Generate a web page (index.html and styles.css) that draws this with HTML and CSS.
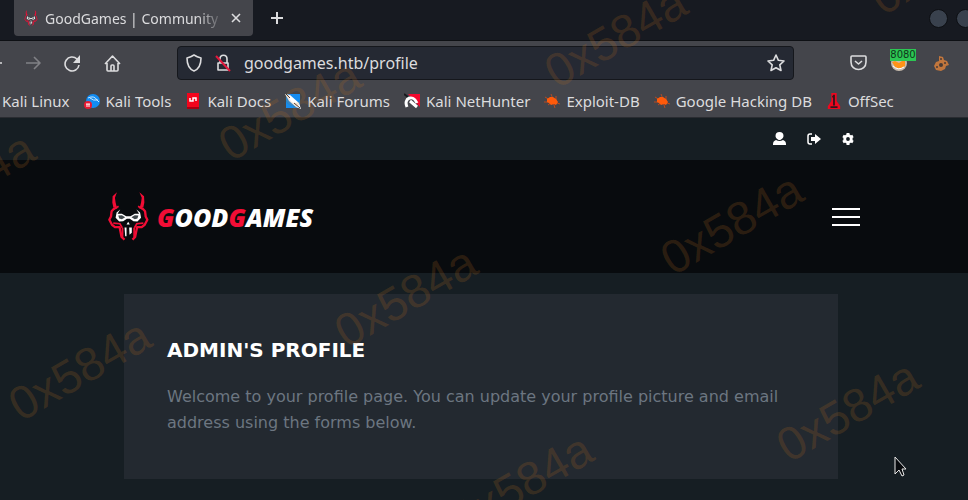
FILE: index.html
```html
<!DOCTYPE html>
<html lang="en">

<head>
    <meta charset="UTF-8">
    <meta name="viewport" content="width=device-width, initial-scale=1.0">
    <title>GoodGames | Community</title>
    <link rel="stylesheet" href="styles.css">
</head>

<body>
    <svg class="symbols" aria-hidden="true">
        <symbol id="mascot" viewBox="22 14 124 148">
            <path fill="#f20d35" d="M49 15 L36 27 L35 46 L38 60 L50 65 L45 46 L43 31 Z M117 15 L131 27 L132 46 L129 60 L117 65 L122 46 L124 31 Z" />
            <path fill="none" stroke="#f20d35" stroke-width="7" stroke-linejoin="round" d="M42 62 L33 72 L31 88 L26 98 L34 113 L43 120 L57 120 L63 150 L72 158 M125 62 L134 72 L136 88 L141 98 L133 113 L124 120 L110 120 L104 150 L96 158" />
            <path fill="none" stroke="#f20d35" stroke-width="5" d="M40 66 L54 57 M127 66 L113 57 M38 108 L58 110 L65 122 M129 108 L109 110 L102 122 M66 122 V150 M101 122 V150" />
            <path fill="#fff" d="M59 67 L48 76 L45 92 L56 103 L68 102 L79 95 H88 L99 102 L111 103 L122 92 L119 76 L108 67 L116 80 L103 80 L90 87 H77 L64 80 L51 80 Z" />
            <path fill="#40484c" d="M53 85 L64 84 L74 90 L64 96 L56 94 Z M114 85 L103 84 L93 90 L103 96 L111 94 Z" />
            <path fill="#fff" d="M83 104 L88 112 H78 Z M72 121 H78 V148 H74 Z M86 121 H94 V137 L87 143 Z" />
        </symbol>
        <symbol id="spider" viewBox="0 0 16 16">
            <path stroke="#b64b22" stroke-width="1" d="M1 4 L6 7 M0 9 H7 M4 12 L8 9 M7 1 L9 6 M12 3 V7 M16 11 L10 9 M11 15 L9 9" />
            <path fill="#ff5a0a" d="M3 6 L6 4 L9 4 L12 6 L14 9 L12 12 L10 11 L7 12 L5 10 L3 9 Z" />
        </symbol>
    </svg>

    <div class="tab-bar">
        <div class="tab">
            <svg class="icon-small"><use href="#mascot" /></svg>
            <span class="tab-title">GoodGames | Community</span>
            <button class="icon-button" aria-label="Close tab">
                <svg width="10" height="10" viewBox="0 0 10 10"><path class="line" d="M1 1 L9 9 M9 1 L1 9" /></svg>
            </button>
        </div>
        <button class="icon-button" aria-label="New tab">
            <svg width="14" height="14" viewBox="0 0 14 14"><path class="line bold" d="M7 1 V13 M1 7 H13" /></svg>
        </button>
        <div class="window-buttons">
            <button aria-label="Minimize"></button>
            <button aria-label="Maximize"></button>
        </div>
    </div>

    <div class="toolbar">
        <div class="nav-row">
            <button class="icon-button" aria-label="Back">
                <svg width="2" height="16" viewBox="0 0 2 16"><path class="line" d="M0 8 H2" /></svg>
            </button>
            <button class="icon-button dim" aria-label="Forward">
                <svg width="16" height="16" viewBox="0 0 16 16"><path class="line" d="M1 8 H15 M9 2 L15 8 L9 14" /></svg>
            </button>
            <button class="icon-button" aria-label="Reload">
                <svg width="17" height="17" viewBox="0 0 17 17"><path class="line" d="M15 10 A7 7 0 1 1 13 4 L15 6" /><path fill="#dcdcde" d="M16 0 V8 H9 Z" /></svg>
            </button>
            <button class="icon-button" aria-label="Home">
                <svg width="17" height="17" viewBox="0 0 17 17"><path class="line" d="M1 9 L8.500 1 L16 9 M3 8 V15 Q3 16 4 16 H13 Q14 16 14 15 V8 M7 16 V11 Q7 10 8 10 H9 Q10 10 10 11 V16" /></svg>
            </button>
            <div class="url-bar">
                <svg width="16" height="18" viewBox="0 0 16 18"><path class="line" d="M8 1 Q11 3 15 4 C15 11 13 15 8 17 C3 15 1 11 1 4 Q5 3 8 1 Z" /></svg>
                <svg width="16" height="18" viewBox="0 0 16 18"><path class="line" d="M3 9 H13 V16 H3 Z M5 9 V5 C5 0 12 0 12 5 V9" /><path stroke="#e2183d" stroke-width="2" d="M1 2 L15 17" /></svg>
                <input type="text" aria-label="Address" value="goodgames.htb/profile">
                <button class="icon-button" aria-label="Bookmark this page">
                    <svg width="18" height="18" viewBox="0 0 18 18"><path class="line" d="M9 1 L11.400 6.300 L17 7 L12.800 10.900 L14 16.500 L9 13.700 L4 16.500 L5.200 10.900 L1 7 L6.600 6.300 Z" /></svg>
                </button>
            </div>
            <button class="icon-button" aria-label="Save to Pocket">
                <svg width="17" height="16" viewBox="0 0 17 16"><path class="line" d="M2 1 H15 Q16 1 16 2 V7 C16 17 1 17 1 7 V2 Q1 1 2 1 Z M5 6 L8.500 9 L12 6" /></svg>
            </button>
            <button class="icon-button proxy" aria-label="Proxy">
                <svg width="18" height="18" viewBox="0 0 18 18"><circle cx="9" cy="9" r="8" fill="#c8bcae" /><path fill="#ff9318" d="M2 8 L5 7 L9 9 L15 5 L15 12 L10 15 L5 13 Z" /><path fill="none" stroke="#fff" stroke-width="1" d="M3 12 Q8 17 14 13" /></svg>
                <span class="badge">8080</span>
            </button>
            <button class="icon-button" aria-label="Cookies">
                <svg width="17" height="17" viewBox="0 0 17 17"><path fill="#c1763d" d="M6 1 L10 2 L11 5 L14 6 L16 10 L13 11 L12 14 L8 16 L3 15 L1 11 L3 7 L6 6 Z" /><g fill="#493b36"><circle cx="8" cy="10" r="2" /><circle cx="4" cy="12" r="1" /><circle cx="12" cy="8" r="1" /><circle cx="8" cy="4" r="1" /></g></svg>
            </button>
        </div>

        <nav class="bookmarks">
            <a href="#">Kali Linux</a>
            <a href="#">
                <svg class="icon" viewBox="0 0 16 16"><circle cx="9" cy="8" r="7" fill="#128cf2" /><path fill="none" stroke="#cae9ff" d="M4 5 Q10 2 13 7 L15 9 M6 5 Q9 8 14 7" /><circle cx="4" cy="12" r="4" fill="#e71932" /><path fill="none" stroke="#fff" d="M2 11 H6 M3 11 V14 M5 11 V14" /></svg>
                Kali Tools
            </a>
            <a href="#">
                <svg class="icon" viewBox="0 0 16 16"><path fill="#f3051c" d="M2 0 H14 V16 H2 Z" /><path fill="#a90011" d="M2 14 H14 V16 H2 Z" /><path fill="none" stroke="#fff" stroke-width="1.500" d="M5 5 V8 H8 V5 H11 V8" /></svg>
                Kali Docs
            </a>
            <a href="#">
                <svg class="icon" viewBox="0 0 16 16"><path fill="#168cf0" d="M1 1 H15 V15 H1 Z" /><path fill="#fff" d="M0 1 L5 2 L14 10 L16 16 L11 14 L4 8 Z" /><path stroke="#45362f" stroke-width="1" d="M1 1 L5 5 M9 10 L15 15" /></svg>
                Kali Forums
            </a>
            <a href="#">
                <svg class="icon" viewBox="0 0 16 16"><path fill="#f3092e" d="M4 1 H16 V14 Z" /><path fill="none" stroke="#18191d" stroke-width="2" d="M0 1 L4 4" /><path fill="none" stroke="#fff" stroke-width="3" d="M3 14 C-1 5 9 1 13 10 M6 8 L13 14" /></svg>
                Kali NetHunter
            </a>
            <a href="#"><svg class="icon"><use href="#spider" /></svg>Exploit-DB</a>
            <a href="#"><svg class="icon"><use href="#spider" /></svg>Google Hacking DB</a>
            <a href="#">
                <svg class="icon" viewBox="0 0 16 18"><path fill="#ed071e" d="M5 0 H11 V9 L15 15 V18 H1 V15 L5 9 Z" /><path fill="none" stroke="#30151b" stroke-width="2" d="M8 2 V14 M4 16 H12 M6 4 H8" /></svg>
                OffSec
            </a>
        </nav>
    </div>

    <div class="top-links">
        <div class="container">
            <a href="#" aria-label="Profile">
                <svg width="13" height="14" viewBox="0 0 13 14"><path fill="#fff" d="M6.500 0 A4 4 0 0 1 10.500 4 C10.500 6 8 8 6.500 8 C5 8 2.500 6 2.500 4 A4 4 0 0 1 6.500 0 M3 8 Q6.500 10 10 8 Q13 9 13 12 V13 H0 V12 Q0 9 3 8" /></svg>
            </a>
            <a href="#" aria-label="Log out">
                <svg width="14" height="12" viewBox="0 0 14 12"><path fill="none" stroke="#fff" stroke-width="1.500" d="M5 1 H3 Q1 1 1 3 V9 Q1 11 3 11 H5" /><path fill="#fff" d="M4 4 H8 V1 L14 6 L8 11 V8 H4 Z" /></svg>
            </a>
            <a href="#" aria-label="Settings">
                <svg width="12" height="12" viewBox="0 0 12 12"><circle cx="6" cy="6" r="3.300" fill="none" stroke="#fff" stroke-width="2.800" /><path stroke="#fff" stroke-width="3" d="M6 0 V3 M6 9 V12 M1 3 L3 4 M9 8 L11 9 M1 9 L3 8 M9 4 L11 3" /></svg>
            </a>
        </div>
    </div>

    <header class="site-header">
        <div class="container">
            <a class="logo" href="#">
                <svg width="41" height="49"><use href="#mascot" /></svg>
                <span><b>G</b>OOD<b>G</b>AMES</span>
            </a>
            <button class="menu-button" aria-label="Menu"><i></i><i></i><i></i></button>
        </div>
    </header>

    <main class="container">
        <section class="card">
            <h1>Admin's Profile</h1>
            <p>Welcome to your profile page. You can update your profile picture and email address using the forms below.</p>
        </section>
    </main>

    <!-- tiled watermark over the whole window -->
    <svg class="watermark" aria-hidden="true">
        <text transform="translate(-37 182) rotate(-30)" dy="17">0x584a</text>
        <text transform="translate(289 109) rotate(-30)" dy="17">0x584a</text>
        <text transform="translate(615 36) rotate(-30)" dy="17">0x584a</text>
        <text transform="translate(941 -37) rotate(-30)" dy="17">0x584a</text>
        <text transform="translate(79 369) rotate(-30)" dy="17">0x584a</text>
        <text transform="translate(405 296) rotate(-30)" dy="17">0x584a</text>
        <text transform="translate(731 223) rotate(-30)" dy="17">0x584a</text>
        <text transform="translate(521 483) rotate(-30)" dy="17">0x584a</text>
        <text transform="translate(847 410) rotate(-30)" dy="17">0x584a</text>
    </svg>

    <svg class="cursor" width="13" height="22" viewBox="0 0 13 22" aria-hidden="true">
        <path fill="#080a0d" stroke="#e8e8e8" d="M1 1 V18 L5 14 L8 20 L10 19 L8 13 H12 Z" />
    </svg>
</body>

</html>
```
FILE: styles.css
```css
* {
    box-sizing: border-box;
}

body {
    margin: 0;
    min-height: 100vh;
    position: relative;
    overflow: hidden;
    font-family: "Noto Sans", sans-serif;
    font-size: 16px;
    background-color: #161e23;
    color: #dcdcde;
}

svg {
    display: block;
    flex-shrink: 0;
}

a {
    color: inherit;
    text-decoration: none;
}

.symbols {
    position: absolute;
    width: 0;
    height: 0;
}

.icon {
    width: 16px;
    height: 16px;
}

.icon-small {
    width: 14px;
    height: 16px;
}

.line {
    fill: none;
    stroke: #dcdcde;
    stroke-width: 1.6;
    stroke-linejoin: round;
}

.bold {
    stroke-width: 2;
}

.icon-button {
    padding: 0;
    border: none;
    background: none;
    cursor: pointer;
}

.dim {
    opacity: 0.4;
}

/* browser tabs */
.tab-bar {
    display: flex;
    align-items: center;
    gap: 17px;
    height: 41px;
    padding: 0 0 4px 14px;
    background-color: #171a21;
    border-bottom: 1px solid #0e1014;
    overflow: hidden;
}

.tab {
    display: flex;
    align-items: center;
    width: 239px;
    height: 36px;
    padding: 0 12px 0 10px;
    gap: 7px;
    background-color: #44454b;
    border-radius: 0 0 4px 4px;
}

.tab-title {
    flex: 1;
    overflow: hidden;
    white-space: nowrap;
    font-size: 14px;
    mask-image: linear-gradient(to right, #000 85%, transparent);
}

.window-buttons {
    display: flex;
    gap: 8px;
    margin-left: auto;
    margin-right: -7px;
}

.window-buttons button {
    width: 19px;
    height: 19px;
    padding: 0;
    background-color: #39414d;
    border: 1px solid #0d0f13;
    border-radius: 50%;
}

/* address bar and bookmarks */
.toolbar {
    height: 77px;
    padding-top: 5px;
    background-color: #44454b;
    border-bottom: 1px solid #2a2c31;
}

.nav-row {
    display: flex;
    align-items: center;
    gap: 23px;
    padding: 0 18px 0 0;
}

.url-bar {
    flex: 1;
    display: flex;
    align-items: center;
    gap: 13px;
    height: 34px;
    margin: 0 33px;
    padding: 0 8px;
    background-color: #252933;
    border: 1px solid #15171c;
    border-radius: 4px;
}

.url-bar input {
    flex: 1;
    min-width: 0;
    padding: 0;
    border: none;
    outline: none;
    background: none;
    color: #dcdcde;
    font: inherit;
}

.proxy {
    position: relative;
    margin-right: 2px;
}

.badge {
    position: absolute;
    left: 0;
    top: -5px;
    width: 26px;
    height: 12px;
    overflow: hidden;
    background-color: #2cc653;
    color: #10351b;
    font-family: "DejaVu Sans", sans-serif;
    font-size: 10px;
    line-height: 12px;
}

.bookmarks {
    display: flex;
    gap: 14px;
    padding: 9px 2px;
    white-space: nowrap;
    font-size: 15px;
    line-height: 24px;
}

.bookmarks a {
    display: flex;
    align-items: center;
    gap: 6px;
}

/* site */
.container {
    max-width: 752px;
    margin: 0 auto;
}

.top-links .container {
    display: flex;
    justify-content: flex-end;
    align-items: center;
    gap: 21px;
    height: 42px;
    padding-right: 6px;
}

.site-header {
    background-color: #080b0e;
}

.site-header .container {
    display: flex;
    justify-content: space-between;
    align-items: center;
    height: 113px;
}

.logo {
    display: flex;
    align-items: center;
    gap: 8px;
    font-family: "Open Sans", sans-serif;
    font-size: 25px;
    font-weight: 800;
    font-style: italic;
    color: #fff;
}

.logo b {
    font-weight: 800;
    color: #f20d35;
}

.menu-button {
    display: flex;
    flex-direction: column;
    gap: 6px;
    width: 28px;
    padding: 0;
    border: none;
    background: none;
}

.menu-button i {
    width: 100%;
    height: 2px;
    background-color: #fff;
}

.card {
    margin: 21px 22px 21px 16px;
    padding: 43px;
    background-color: #232930;
    font-family: "DejaVu Sans", sans-serif;
}

.card h1 {
    margin: 0 0 21px;
    font-size: 20px;
    line-height: 26px;
    text-transform: uppercase;
    color: #fff;
}

.card p {
    margin: 0;
    font-size: 16px;
    line-height: 26px;
    color: #6c7681;
}

.watermark {
    position: absolute;
    inset: 0;
    width: 100%;
    height: 100%;
    pointer-events: none;
    fill: rgba(190, 110, 30, 0.2);
    font-family: "Liberation Sans", sans-serif;
    font-size: 47px;
    text-anchor: middle;
}

.cursor {
    position: absolute;
    left: 894px;
    top: 456px;
}
```
